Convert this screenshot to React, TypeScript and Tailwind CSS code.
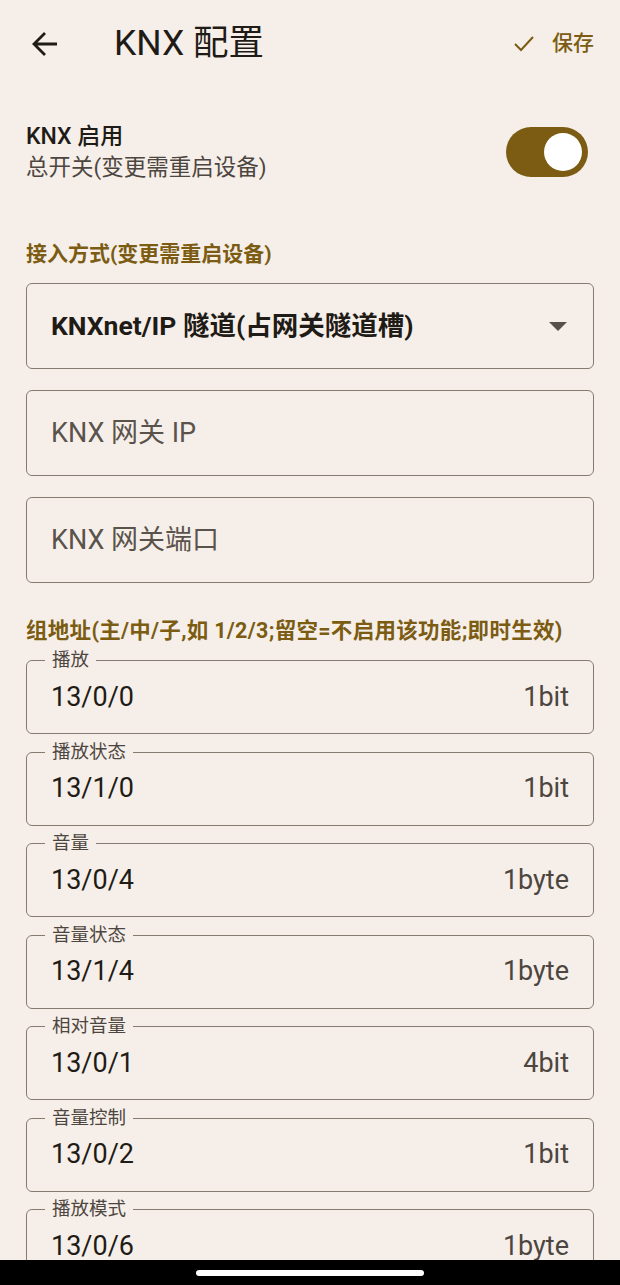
const fields = [
  { label: "播放", value: "13/0/0", type: "1bit" },
  { label: "播放状态", value: "13/1/0", type: "1bit" },
  { label: "音量", value: "13/0/4", type: "1byte" },
  { label: "音量状态", value: "13/1/4", type: "1byte" },
  { label: "相对音量", value: "13/0/1", type: "4bit" },
  { label: "音量控制", value: "13/0/2", type: "1bit" },
  { label: "播放模式", value: "13/0/6", type: "1byte" },
];

function GroupField({ label, value, type }: { label: string; value: string; type: string }) {
  return (
    <div className="relative h-[74px] shrink-0 rounded-[6px] border-[1.5px] border-[#857b70] flex items-center justify-between pl-[24px] pr-[24px]">
      <span className="absolute -top-[14px] left-[18px] px-[7px] bg-[#f6efe9] text-[18.5px] leading-[26px] text-[#4d4640]">
        {label}
      </span>
      <span className="text-[27px] text-[#1f1b16]">{value}</span>
      <span className="text-[27px] text-[#4d4640]">{type}</span>
    </div>
  );
}

export default function App() {
  return (
    <div
      className="w-[620px] h-[1285px] overflow-hidden flex flex-col bg-[#f6efe9]"
      style={{ fontFamily: 'Roboto, "Noto Sans CJK SC", sans-serif' }}
    >
      <div className="flex-1 overflow-hidden px-[26px]">
        {/* top bar */}
        <div className="h-[88px] flex items-center">
          <svg width="28" height="28" viewBox="0 0 28 28" className="ml-[5px]">
            <path d="M26 14H3M14 3L3 14l11 11" fill="none" stroke="#1f1b16" strokeWidth="2.8" />
          </svg>
          <span className="ml-[55px] text-[35.5px] text-[#1f1b16]">KNX 配置</span>
          <div className="ml-auto flex items-center text-[#7b5c12]">
            <svg width="22" height="18" viewBox="0 0 22 18">
              <path d="M2 9l6 6L20 2" fill="none" stroke="#7b5c12" strokeWidth="2" />
            </svg>
            <span className="ml-[17px] text-[21px] font-medium">保存</span>
          </div>
        </div>

        {/* enable row */}
        <div className="mt-[34px] h-[60px] flex items-center justify-between">
          <div className="flex flex-col">
            <span className="text-[23px] leading-[30px] font-medium text-[#1f1b16]">KNX 启用</span>
            <span className="text-[22.5px] leading-[30px] text-[#4d4640]">总开关(变更需重启设备)</span>
          </div>
          <div className="mr-[6px] w-[82px] h-[50px] rounded-full bg-[#7b5c12] flex items-center justify-end pr-[6px]">
            <div className="w-[38px] h-[38px] rounded-full bg-white" />
          </div>
        </div>

        <div className="mt-[58px] text-[21px] leading-[28px] font-bold text-[#7b5c12]">接入方式(变更需重启设备)</div>

        <div className="mt-[15px] flex flex-col gap-[21px]">
          <div className="h-[86px] rounded-[6px] border-[1.5px] border-[#857b70] flex items-center justify-between pl-[24px] pr-[26px]">
            <span className="text-[26.5px] font-bold text-[#1f1b16]">KNXnet/IP 隧道(占网关隧道槽)</span>
            <svg width="18" height="9" viewBox="0 0 18 9">
              <path d="M0 0h18L9 9z" fill="#57514b" />
            </svg>
          </div>
          <div className="h-[86px] rounded-[6px] border-[1.5px] border-[#857b70] flex items-center pl-[24px]">
            <span className="text-[27px] text-[#5a534c]">KNX 网关 IP</span>
          </div>
          <div className="h-[86px] rounded-[6px] border-[1.5px] border-[#857b70] flex items-center pl-[24px]">
            <span className="text-[27px] text-[#5a534c]">KNX 网关端口</span>
          </div>
        </div>

        <div className="mt-[34px] text-[21.5px] leading-[28px] font-bold text-[#7b5c12] tracking-[0.3px]">
          组地址(主/中/子,如 1/2/3;留空=不启用该功能;即时生效)
        </div>

        <div className="mt-[15px] flex flex-col gap-[17.5px]">
          {fields.map((f) => (
            <GroupField key={f.label} {...f} />
          ))}
        </div>
      </div>

      {/* system nav bar */}
      <div className="h-[25px] shrink-0 bg-black flex items-center justify-center">
        <div className="w-[228px] h-[6px] rounded-full bg-white" />
      </div>
    </div>
  );
}
